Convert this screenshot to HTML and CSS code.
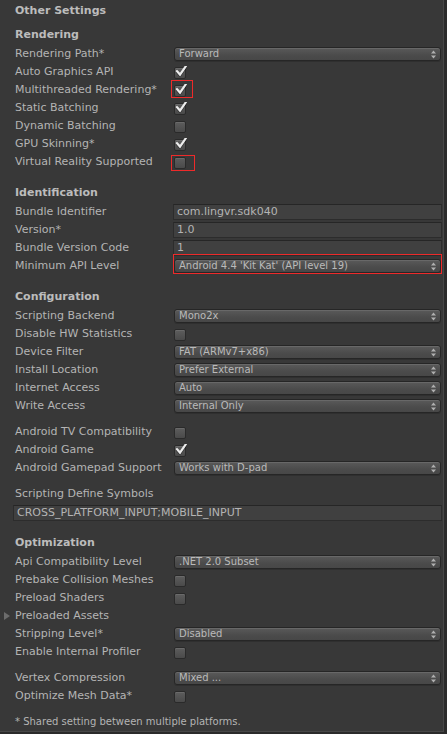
FILE: index.html
```html
<!DOCTYPE html>
<html>
<head>
<meta charset="utf-8">
<link rel="stylesheet" href="styles.css">
</head>
<body>
<div class="panel">
  <div class="title">Other Settings</div>

  <div class="section first">Rendering</div>
  <div class="row"><span class="label">Rendering Path*</span><div class="ctl"><div class="dropdown"><span>Forward</span><svg class="arrows" viewBox="0 0 5 9" width="5" height="9"><path d="M0 3.6 L2.5 0.6 L5 3.6Z M0 5.4 L2.5 8.4 L5 5.4Z"/></svg></div></div></div>
  <div class="row"><span class="label">Auto Graphics API</span><div class="ctl"><span class="check"><svg class="tick" viewBox="0 0 12 12" width="12" height="12"><path d="M2 5.2 L5 8.6 L10.6 0.6"/></svg></span></div></div>
  <div class="row"><span class="label">Multithreaded Rendering*</span><div class="ctl"><span class="check"><svg class="tick" viewBox="0 0 12 12" width="12" height="12"><path d="M2 5.2 L5 8.6 L10.6 0.6"/></svg></span><span class="mark mark-mt"></span></div></div>
  <div class="row"><span class="label">Static Batching</span><div class="ctl"><span class="check"><svg class="tick" viewBox="0 0 12 12" width="12" height="12"><path d="M2 5.2 L5 8.6 L10.6 0.6"/></svg></span></div></div>
  <div class="row"><span class="label">Dynamic Batching</span><div class="ctl"><span class="check"></span></div></div>
  <div class="row"><span class="label">GPU Skinning*</span><div class="ctl"><span class="check"><svg class="tick" viewBox="0 0 12 12" width="12" height="12"><path d="M2 5.2 L5 8.6 L10.6 0.6"/></svg></span></div></div>
  <div class="row"><span class="label">Virtual Reality Supported</span><div class="ctl"><span class="check"></span><span class="mark mark-vr"></span></div></div>

  <div class="section">Identification</div>
  <div class="row"><span class="label">Bundle Identifier</span><div class="ctl"><div class="field">com.lingvr.sdk040</div></div></div>
  <div class="row"><span class="label">Version*</span><div class="ctl"><div class="field">1.0</div></div></div>
  <div class="row"><span class="label">Bundle Version Code</span><div class="ctl"><div class="field">1</div></div></div>
  <div class="row"><span class="label">Minimum API Level</span><div class="ctl"><div class="dropdown"><span>Android 4.4 'Kit Kat' (API level 19)</span><svg class="arrows" viewBox="0 0 5 9" width="5" height="9"><path d="M0 3.6 L2.5 0.6 L5 3.6Z M0 5.4 L2.5 8.4 L5 5.4Z"/></svg></div><span class="mark mark-api"></span></div></div>

  <div class="section">Configuration</div>
  <div class="row"><span class="label">Scripting Backend</span><div class="ctl"><div class="dropdown"><span>Mono2x</span><svg class="arrows" viewBox="0 0 5 9" width="5" height="9"><path d="M0 3.6 L2.5 0.6 L5 3.6Z M0 5.4 L2.5 8.4 L5 5.4Z"/></svg></div></div></div>
  <div class="row"><span class="label">Disable HW Statistics</span><div class="ctl"><span class="check"></span></div></div>
  <div class="row"><span class="label">Device Filter</span><div class="ctl"><div class="dropdown"><span>FAT (ARMv7+x86)</span><svg class="arrows" viewBox="0 0 5 9" width="5" height="9"><path d="M0 3.6 L2.5 0.6 L5 3.6Z M0 5.4 L2.5 8.4 L5 5.4Z"/></svg></div></div></div>
  <div class="row"><span class="label">Install Location</span><div class="ctl"><div class="dropdown"><span>Prefer External</span><svg class="arrows" viewBox="0 0 5 9" width="5" height="9"><path d="M0 3.6 L2.5 0.6 L5 3.6Z M0 5.4 L2.5 8.4 L5 5.4Z"/></svg></div></div></div>
  <div class="row"><span class="label">Internet Access</span><div class="ctl"><div class="dropdown"><span>Auto</span><svg class="arrows" viewBox="0 0 5 9" width="5" height="9"><path d="M0 3.6 L2.5 0.6 L5 3.6Z M0 5.4 L2.5 8.4 L5 5.4Z"/></svg></div></div></div>
  <div class="row"><span class="label">Write Access</span><div class="ctl"><div class="dropdown"><span>Internal Only</span><svg class="arrows" viewBox="0 0 5 9" width="5" height="9"><path d="M0 3.6 L2.5 0.6 L5 3.6Z M0 5.4 L2.5 8.4 L5 5.4Z"/></svg></div></div></div>

  <div class="row gap"><span class="label">Android TV Compatibility</span><div class="ctl"><span class="check"></span></div></div>
  <div class="row"><span class="label">Android Game</span><div class="ctl"><span class="check"><svg class="tick" viewBox="0 0 12 12" width="12" height="12"><path d="M2 5.2 L5 8.6 L10.6 0.6"/></svg></span></div></div>
  <div class="row"><span class="label">Android Gamepad Support</span><div class="ctl"><div class="dropdown"><span>Works with D-pad</span><svg class="arrows" viewBox="0 0 5 9" width="5" height="9"><path d="M0 3.6 L2.5 0.6 L5 3.6Z M0 5.4 L2.5 8.4 L5 5.4Z"/></svg></div></div></div>

  <div class="row gap"><span class="label wide">Scripting Define Symbols</span></div>
  <div class="row"><div class="field define">CROSS_PLATFORM_INPUT;MOBILE_INPUT</div></div>

  <div class="section">Optimization</div>
  <div class="row"><span class="label">Api Compatibility Level</span><div class="ctl"><div class="dropdown"><span>.NET 2.0 Subset</span><svg class="arrows" viewBox="0 0 5 9" width="5" height="9"><path d="M0 3.6 L2.5 0.6 L5 3.6Z M0 5.4 L2.5 8.4 L5 5.4Z"/></svg></div></div></div>
  <div class="row"><span class="label">Prebake Collision Meshes</span><div class="ctl"><span class="check"></span></div></div>
  <div class="row"><span class="label">Preload Shaders</span><div class="ctl"><span class="check"></span></div></div>
  <div class="row"><span class="label foldout">Preloaded Assets</span></div>
  <div class="row"><span class="label">Stripping Level*</span><div class="ctl"><div class="dropdown"><span>Disabled</span><svg class="arrows" viewBox="0 0 5 9" width="5" height="9"><path d="M0 3.6 L2.5 0.6 L5 3.6Z M0 5.4 L2.5 8.4 L5 5.4Z"/></svg></div></div></div>
  <div class="row"><span class="label">Enable Internal Profiler</span><div class="ctl"><span class="check"></span></div></div>

  <div class="row gap"><span class="label">Vertex Compression</span><div class="ctl"><div class="dropdown"><span>Mixed ...</span><svg class="arrows" viewBox="0 0 5 9" width="5" height="9"><path d="M0 3.6 L2.5 0.6 L5 3.6Z M0 5.4 L2.5 8.4 L5 5.4Z"/></svg></div></div></div>
  <div class="row"><span class="label">Optimize Mesh Data*</span><div class="ctl"><span class="check"></span></div></div>

  <div class="note">* Shared setting between multiple platforms.</div>
</div>
</body>
</html>
```

FILE: styles.css
```css
* { box-sizing: border-box; }
html, body { margin: 0; padding: 0; background: #383838; }
body {
  font-family: "DejaVu Sans", sans-serif;
  font-size: 11px;
  color: #b4b4b4;
}
.panel {
  width: 447px;
  height: 734px;
  background: #383838;
  padding: 0 3px 0 15px;
  border-right: 3px solid #2b2b2b;
  border-bottom: 2px solid #2a2a2a;
  box-shadow: inset -1px -1px 0 #474747;
  overflow: hidden;
}
.title {
  height: 22px;
  line-height: 22px;
  font-weight: bold;
  color: #bcbcbc;
}
.section {
  margin-top: 12px;
  height: 20px;
  line-height: 20px;
  font-weight: bold;
  color: #bcbcbc;
}
.section.first { margin-top: 3px; }
.row {
  display: flex;
  align-items: center;
  height: 18px;
}
.row.gap { margin-top: 8px; }
.label {
  width: 159px;
  flex: none;
  white-space: nowrap;
  line-height: 18px;
}
.label.wide { width: auto; }
.label.foldout::before {
  content: "";
  display: inline-block;
  width: 0;
  height: 0;
  border-left: 6px solid #6c6c6c;
  border-top: 4px solid transparent;
  border-bottom: 4px solid transparent;
  margin-left: -11px;
  margin-right: 5px;
  vertical-align: -1px;
}
.ctl {
  flex: 1;
  position: relative;
  display: flex;
  align-items: center;
  height: 18px;
}
.dropdown {
  flex: 1;
  height: 14px;
  display: flex;
  align-items: center;
  justify-content: space-between;
  padding: 0 4px 0 4px;
  font-size: 10px;
  line-height: 12px;
  color: #bababa;
  background: linear-gradient(#5a5a5a, #4b4b4b 60%, #474747);
  border: 1px solid #262626;
  border-radius: 3px;
  box-shadow: inset 0 1px 0 #686868, 0 1px 0 rgba(0,0,0,0.15);
  white-space: nowrap;
}
.arrows { fill: #b0b0b0; flex: none; }
.check {
  position: relative;
  width: 12px;
  height: 12px;
  margin-top: 2px;
  border: 1px solid #2a2a2a;
  border-radius: 2px;
  background: linear-gradient(#5d5d5d, #4a4a4a);
  box-shadow: inset 0 1px 0 #6a6a6a;
}
.tick {
  position: absolute;
  left: 0;
  top: -2px;
  fill: none;
  stroke: #ececec;
  stroke-width: 2.2;
  stroke-linecap: square;
  stroke-linejoin: miter;
  filter: drop-shadow(0 1px 0 rgba(0,0,0,0.5));
}
.field {
  flex: 1;
  height: 16px;
  margin: 0 -1px;
  padding: 0 3px;
  line-height: 14px;
  color: #b4b4b4;
  background: #404040;
  border: 1px solid #2c2c2c;
  border-top-color: #262626;
  white-space: nowrap;
}
.field.define {
  margin: 1px -1px 0 -2px;
}
.mark {
  position: absolute;
  border: 1px solid #ee2a2a;
}
.mark-mt { left: -3px; top: -1px; width: 22px; height: 18px; }
.mark-vr { left: -3px; top: 2px; width: 24px; height: 16px; }
.mark-api { left: -1px; top: -3px; right: -1px; height: 20px; }
.note {
  margin-top: 8px;
  height: 18px;
  line-height: 18px;
  font-size: 10px;
  color: #b4b4b4;
}
```
